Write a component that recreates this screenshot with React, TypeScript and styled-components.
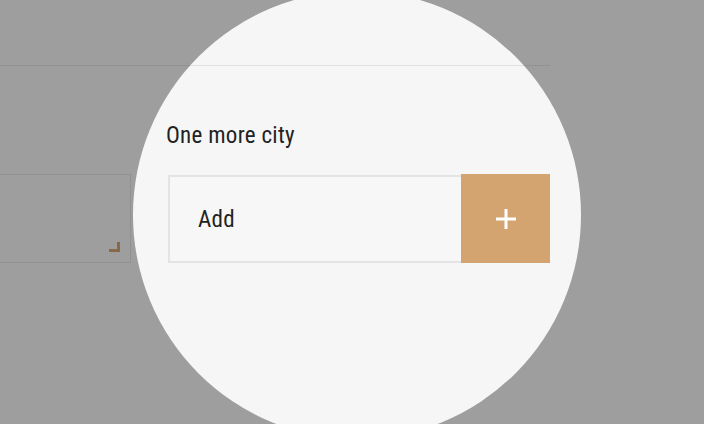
import React from "react";
import styled, { createGlobalStyle } from "styled-components";

const Global = createGlobalStyle`
  html, body { margin: 0; padding: 0; }
  body { width: 704px; height: 424px; overflow: hidden; background: #f6f6f6; font-family: "Roboto Condensed", Roboto, "Liberation Sans", sans-serif; }
`;

const Page = styled.div`
  position: relative;
  width: 704px;
  height: 424px;
  overflow: hidden;
  background: #f6f6f6;
  padding-top: 65px;
  box-sizing: border-box;
`;

const Section = styled.section`
  width: 550px;
  border-top: 1px solid #e2e2e2;
  padding-top: 57px;
  display: grid;
  grid-template-columns: 131px 382px;
  column-gap: 37px;
  align-items: end;
`;

const Column = styled.div`
  display: flex;
  flex-direction: column;
`;

const Label = styled.label`
  font-size: 23px;
  line-height: 26px;
  color: #222;
  margin: 0 0 25px -2px;
  letter-spacing: 0.3px;
`;

const TextArea = styled.div`
  position: relative;
  height: 87px;
  border: 1px solid #e2e2e2;
  border-left: none;
  &::after {
    content: "";
    position: absolute;
    right: 10px;
    bottom: 10px;
    width: 8px;
    height: 7px;
    border-right: 3px solid #d3a46f;
    border-bottom: 3px solid #d3a46f;
  }
`;

const InputGroup = styled.div`
  display: flex;
  height: 89px;
`;

const Field = styled.div`
  flex: 1;
  display: flex;
  align-items: center;
  margin-top: 1px;
  padding-left: 28px;
  border: 2px solid #e4e4e4;
  border-right: none;
  background: #f7f7f7;
  font-size: 23px;
  letter-spacing: 0.3px;
  color: #222;
`;

const AddButton = styled.button`
  width: 89px;
  border: none;
  padding: 0;
  background: #d3a46f;
  display: flex;
  align-items: center;
  justify-content: center;
  cursor: pointer;
`;

const Lens = styled.div`
  position: absolute;
  left: ${357 - 224}px;
  top: ${215 - 224}px;
  width: 448px;
  height: 448px;
  border-radius: 50%;
  box-shadow: 0 0 0 1200px rgba(0, 0, 0, 0.358);
  pointer-events: none;
`;

export default function App() {
  return (
    <>
      <Global />
      <Page>
        <Section>
          <Column>
            <TextArea />
          </Column>
          <Column>
            <Label>One more city</Label>
            <InputGroup>
              <Field>Add</Field>
              <AddButton aria-label="Add">
                <svg width="22" height="22" viewBox="0 0 22 22">
                  <path d="M11 1v20M1 11h20" stroke="#fff" strokeWidth="3" />
                </svg>
              </AddButton>
            </InputGroup>
          </Column>
        </Section>
        <Lens />
      </Page>
    </>
  );
}
